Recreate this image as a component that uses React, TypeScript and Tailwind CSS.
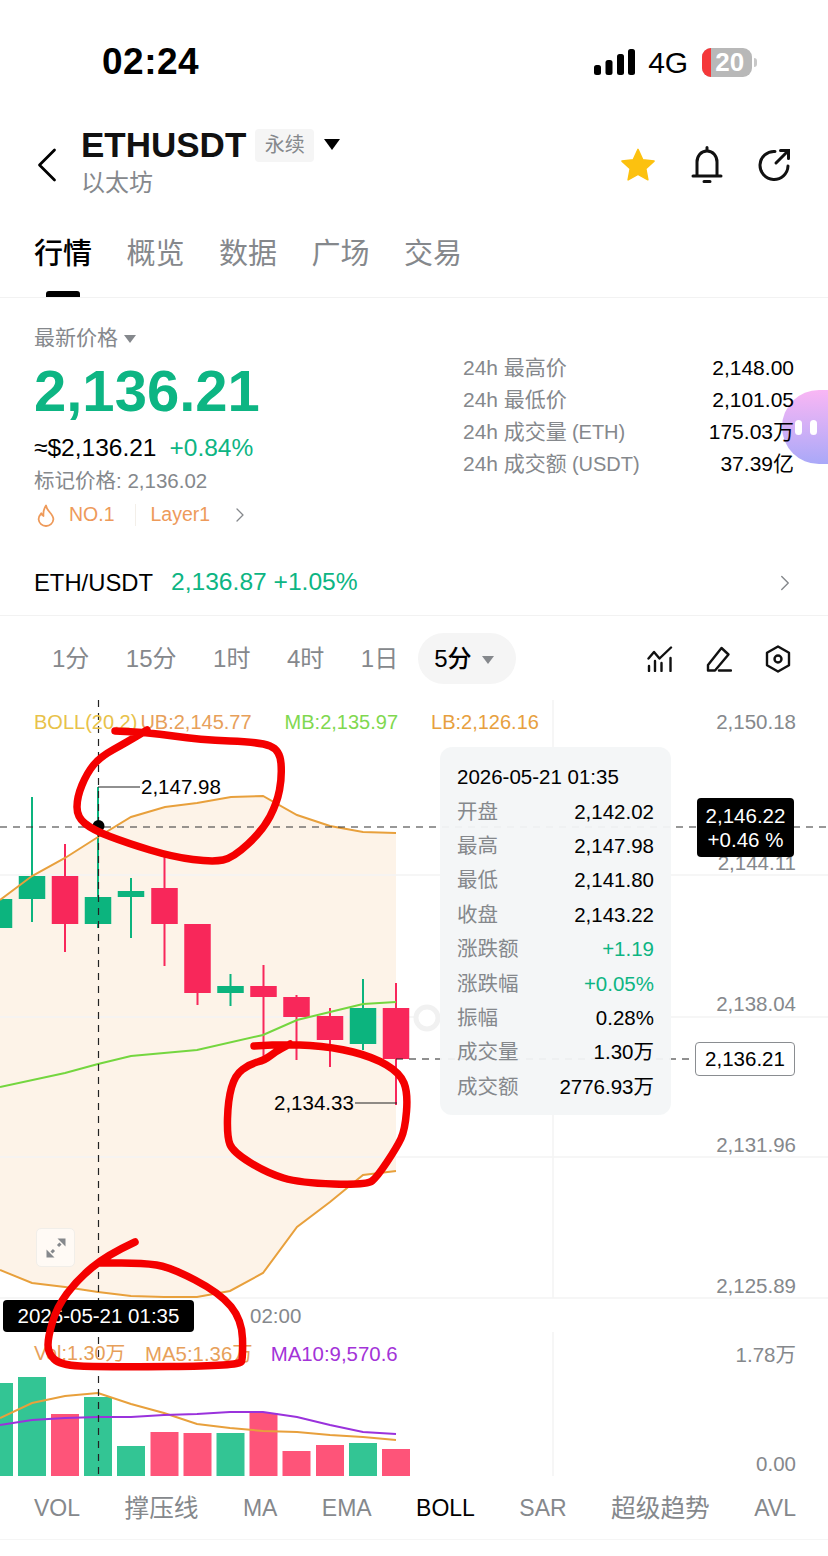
import { ChevronLeft, ChevronRight } from 'lucide-react';

type Pt = [number, number];

const CANDLES = [
    { x: -1, up: true, hi: 899, lo: 928, top: 899, bottom: 928 },
    { x: 32, up: true, hi: 797, lo: 922, top: 876, bottom: 899 },
    { x: 65, up: false, hi: 844, lo: 952, top: 876, bottom: 924 },
    { x: 98, up: true, hi: 787, lo: 928, top: 897, bottom: 924 },
    { x: 131, up: true, hi: 878, lo: 938, top: 891, bottom: 897 },
    { x: 164.5, up: false, hi: 855, lo: 966, top: 888, bottom: 924 },
    { x: 197.5, up: false, hi: 924, lo: 1005, top: 924, bottom: 993 },
    { x: 230.5, up: true, hi: 974, lo: 1006, top: 986, bottom: 993 },
    { x: 263.5, up: false, hi: 965, lo: 1063, top: 986, bottom: 997 },
    { x: 296.5, up: false, hi: 995, lo: 1060, top: 997, bottom: 1017 },
    { x: 330, up: false, hi: 1008, lo: 1067, top: 1016, bottom: 1040 },
    { x: 363, up: true, hi: 979, lo: 1050, top: 1008, bottom: 1044 },
    { x: 396, up: false, hi: 983, lo: 1105, top: 1008, bottom: 1059 },
];

const VOLUMES = [1383, 1377, 1414, 1397, 1446, 1432, 1433, 1433, 1413, 1451, 1445, 1443, 1449];

const UB: Pt[] = [[0, 900], [32, 876], [65, 858], [98, 837], [131, 817], [165, 807], [197, 803], [231, 797], [263, 796], [297, 815], [330, 826], [363, 832], [396, 833]];
const MB: Pt[] = [[0, 1087], [65, 1073], [98, 1064], [131, 1056], [197, 1050], [263, 1035], [297, 1020], [330, 1012], [363, 1004], [396, 1002]];
const LB: Pt[] = [[0, 1270], [32, 1283], [65, 1287], [98, 1292], [131, 1296], [164, 1297], [197, 1297], [230, 1291], [263, 1273], [297, 1227], [330, 1202], [363, 1175], [396, 1171]];
const MA5: Pt[] = [[0, 1418], [32, 1403], [65, 1396], [98, 1393], [131, 1404], [164, 1413], [197, 1424], [230, 1428], [263, 1431], [297, 1432], [330, 1435], [363, 1437], [396, 1440]];
const MA10: Pt[] = [[0, 1425], [32, 1420], [65, 1418], [98, 1417], [131, 1417], [164, 1415], [197, 1414], [230, 1412], [263, 1412], [297, 1417], [330, 1425], [363, 1432], [396, 1434]];

const SCRIBBLES: Pt[][] = [
    [[115, 731], [147, 732], [200, 740], [260, 742], [280, 750], [282, 777], [277, 803], [263, 830], [233, 858], [213, 862], [173, 857], [127, 843], [93, 830], [77, 817], [77, 797], [87, 773], [100, 757], [127, 742], [147, 730]],
    [[254, 1046], [287, 1044], [333, 1047], [373, 1057], [400, 1073], [408, 1093], [405, 1130], [397, 1147], [377, 1177], [367, 1185], [300, 1183], [267, 1173], [233, 1152], [227, 1137], [228, 1100], [235, 1075], [250, 1064], [265, 1060], [275, 1052], [290, 1044]],
    [[135, 1242], [107, 1255], [77, 1280], [57, 1307], [48, 1337], [48, 1353], [60, 1365], [100, 1367], [240, 1366], [243, 1357], [242, 1320], [220, 1293], [170, 1267], [143, 1263], [100, 1263]],
];

const AXIS = [
    { y: 722, label: '2,150.18' },
    { y: 863, label: '2,144.11' },
    { y: 1004, label: '2,138.04' },
    { y: 1145, label: '2,131.96' },
    { y: 1286, label: '2,125.89' },
    { y: 1355, label: '1.78万' },
    { y: 1464, label: '0.00' },
];

const OHLC = [
    { label: '开盘', value: '2,142.02' },
    { label: '最高', value: '2,147.98' },
    { label: '最低', value: '2,141.80' },
    { label: '收盘', value: '2,143.22' },
    { label: '涨跌额', value: '+1.19', green: true },
    { label: '涨跌幅', value: '+0.05%', green: true },
    { label: '振幅', value: '0.28%' },
    { label: '成交量', value: '1.30万' },
    { label: '成交额', value: '2776.93万' },
];

const STATS = [
    { label: '24h 最高价', unit: '', value: '2,148.00' },
    { label: '24h 最低价', unit: '', value: '2,101.05' },
    { label: '24h 成交量', unit: '(ETH)', value: '175.03万' },
    { label: '24h 成交额', unit: '(USDT)', value: '37.39亿' },
];

const line = (pts: Pt[]) => pts.map((p) => p.join(',')).join(' ');

// rounds a hand-drawn stroke by curving through the midpoints
const smooth = (pts: Pt[]) => {
    let d = `M${pts[0][0]} ${pts[0][1]}`;
    for (let i = 1; i < pts.length - 1; i++) {
        const mx = (pts[i][0] + pts[i + 1][0]) / 2;
        const my = (pts[i][1] + pts[i + 1][1]) / 2;
        d += ` Q${pts[i][0]} ${pts[i][1]} ${mx} ${my}`;
    }
    const last = pts[pts.length - 1];
    return `${d} L${last[0]} ${last[1]}`;
};

function StatusBar() {
    return (
        <div className="h-[124px] flex items-center pl-[102px]">
            <span className="text-[37px] font-bold text-black tracking-[0.5px]">02:24</span>
            <svg className="ml-[395px] w-[41px] h-[26px]" viewBox="0 0 41 26" fill="#000">
                <rect x="0" y="16" width="7" height="10" rx="2.5" />
                <rect x="11.5" y="11" width="7" height="15" rx="2.5" />
                <rect x="23" y="5" width="7" height="21" rx="2.5" />
                <rect x="34" y="0" width="7" height="26" rx="2.5" />
            </svg>
            <span className="ml-[13px] text-[30px] font-medium text-black">4G</span>
            <div className="ml-[14px] relative w-[50px] h-[29px] rounded-[9px] bg-[#b8b8b8] overflow-hidden flex items-center justify-end pr-[8px]">
                <div className="absolute left-0 top-0 bottom-0 w-[9px] bg-[#f5383a]" />
                <span className="text-[26px] leading-none font-bold text-white">20</span>
            </div>
            <div className="ml-[2px] w-[3px] h-[9px] rounded-r-full bg-[#c8c8c8]" />
        </div>
    );
}

function Header() {
    return (
        <div className="h-[88px] flex items-center pr-[37px] pb-[6px]">
            <ChevronLeft className="ml-[17px] w-[60px] h-[60px] text-black" strokeWidth={1.1} />
            <div className="ml-[4px] self-start flex flex-col">
                <div className="h-[42px] flex items-center">
                    <span className="text-[35px] font-bold text-[#111]">ETHUSDT</span>
                    <span className="ml-[9px] w-[59px] h-[33px] rounded-[4px] bg-[#f5f5f5] flex items-center justify-center text-[20px] text-[#85888c]">永续</span>
                    <div className="ml-[10px] mb-[2px] w-0 h-0 border-x-[8px] border-x-transparent border-t-[11px] border-t-black" />
                </div>
                <span className="h-[34px] leading-[34px] text-[24px] text-[#85888c]">以太坊</span>
            </div>
            <div className="ml-auto flex items-center gap-[33px]">
                <svg className="w-[38px] h-[36px]" viewBox="0 0 24 24" fill="#fcc10f">
                    <path d="M12 1.6l3.2 6.9 7.5.9-5.5 5.1 1.4 7.4L12 18.2l-6.6 3.7 1.4-7.4L1.3 9.4l7.5-.9z" stroke="#fcc10f" strokeLinejoin="round" />
                </svg>
                <svg className="w-[34px] h-[38px]" viewBox="0 0 34 38" fill="none" stroke="#111" strokeWidth="3">
                    <path d="M3 30h28M7 30V16c0-6 4-11 10-11s10 5 10 11v14" strokeLinecap="round" />
                    <path d="M17 1.5v3M14 35.5h6" strokeLinecap="round" />
                </svg>
                <svg className="w-[34px] h-[34px]" viewBox="0 0 34 34" fill="none" stroke="#111" strokeWidth="3" strokeLinecap="round">
                    <path d="M18 3.5A14 14 0 1 0 31 18" />
                    <path d="M19 15L31 3M23.5 2.5H31.5V10.5" />
                </svg>
            </div>
        </div>
    );
}

function Tabs() {
    const tabs = ['行情', '概览', '数据', '广场', '交易'];
    return (
        <div className="h-[86px] border-b border-[#f2f2f2] pl-[34px] pt-[23px] flex gap-[34.5px] relative">
            {tabs.map((t, i) => (
                <span key={t} className={i === 0 ? 'h-[38px] text-[29px] leading-[38px] font-medium text-black' : 'h-[38px] text-[29px] leading-[38px] text-[#85888c]'}>
                    {t}
                </span>
            ))}
            <div className="absolute left-[46px] bottom-0 w-[34px] h-[6px] rounded-t-[3px] bg-black" />
        </div>
    );
}

function PriceBlock() {
    return (
        <div className="h-[246px] flex">
            <div className="w-[463px] pl-[34px] pt-[26px] flex flex-col">
                <div className="h-[28px] flex items-center text-[21px] text-[#85888c]">
                    最新价格
                    <div className="ml-[6px] mt-[2px] w-0 h-0 border-x-[6px] border-x-transparent border-t-[8px] border-t-[#85888c]" />
                </div>
                <div className="mt-[7px] h-[64px] leading-[64px] text-[58px] font-bold text-[#0db583]">2,136.21</div>
                <div className="mt-[9px] h-[32px] flex items-center text-[24.5px]">
                    <span className="text-black">≈$2,136.21</span>
                    <span className="ml-[13px] text-[#0db583]">+0.84%</span>
                </div>
                <div className="mt-[2px] h-[30px] leading-[30px] text-[20.5px] text-[#85888c]">标记价格: 2,136.02</div>
                <div className="mt-[4px] h-[30px] flex items-center text-[19.5px] text-[#ee9a5a]">
                    <svg className="ml-[3px] w-[18px] h-[23px]" viewBox="0 0 18 23" fill="none" stroke="#ee9a5a" strokeWidth="1.8" strokeLinejoin="round">
                        <path d="M9 1.5c.6 3.5 2.2 4.7 4 7 2 2.4 3.4 4.3 3.4 6.8A7.3 7.3 0 0 1 9 22a7.3 7.3 0 0 1-7.4-6.7c0-2.6 1.2-4.4 2.6-6 .5 1.4 1.200 2.200 2.300 2.700C6 8 7 4.500 9 1.500z" />
                    </svg>
                    <span className="ml-[14px]">NO.1</span>
                    <div className="ml-[20px] w-px h-[22px] bg-[#f3efe9]" />
                    <span className="ml-[15px]">Layer1</span>
                    <ChevronRight className="ml-[18px] w-[24px] h-[24px] text-[#85888c]" strokeWidth={1.3} />
                </div>
            </div>
            <div className="relative z-10 flex-1 pt-[54px] pr-[34px] flex flex-col">
                {STATS.map((s) => (
                    <div key={s.label} className="h-[32px] flex items-center justify-between text-[21px]">
                        <span className="text-[#85888c]">
                            {s.label}
                            {s.unit && <span className="ml-[5px] text-[20px]">{s.unit}</span>}
                        </span>
                        <span className="text-black">{s.value}</span>
                    </div>
                ))}
            </div>
        </div>
    );
}

function SpotRow() {
    return (
        <div className="h-[72px] border-b border-[#f2f2f2] pl-[34px] pr-[30px] pt-[6px] flex items-center">
            <span className="text-[23.8px] text-black">ETH/USDT</span>
            <span className="ml-[18px] text-[24.6px] text-[#0db583]">2,136.87 +1.05%</span>
            <ChevronRight className="ml-auto w-[26px] h-[26px] text-[#85888c]" strokeWidth={1.3} />
        </div>
    );
}

function IntervalRow() {
    const items = ['1分', '15分', '1时', '4时', '1日'];
    return (
        <div className="h-[84px] pl-[52px] pr-[37px] pt-[17px] flex items-start">
            <div className="h-[51px] flex items-center gap-[36.5px] text-[24px] text-[#85888c]">
                {items.map((t) => (
                    <span key={t}>{t}</span>
                ))}
            </div>
            <div className="ml-[20px] w-[98px] h-[51px] rounded-full bg-[#f5f5f5] pl-[16px] flex items-center text-[24px] font-medium text-black">
                5分
                <div className="ml-[10px] mt-[2px] w-0 h-0 border-x-[6px] border-x-transparent border-t-[8px] border-t-[#85888c]" />
            </div>
            <div className="ml-auto h-[51px] flex items-center gap-[33px]">
                <svg className="w-[26px] h-[26px]" viewBox="0 0 26 26" fill="none" stroke="#111" strokeWidth="2.4" strokeLinecap="round" strokeLinejoin="round">
                    <path d="M1.500 12.500L7 6l5.500 6.500L24 1.500" />
                    <path d="M2 25v-5M8 25V15M14.500 25v-8M23.500 25V12" />
                </svg>
                <svg className="w-[26px] h-[26px]" viewBox="0 0 26 26" fill="none" stroke="#111" strokeWidth="2.4" strokeLinejoin="round" strokeLinecap="round">
                    <path d="M2 19L15.500 2l7 6.500L9 24.500H2z" />
                    <path d="M13 24.500h12" />
                </svg>
                <svg className="w-[26px] h-[28px]" viewBox="0 0 26 28" fill="none" stroke="#111" strokeWidth="2.400" strokeLinejoin="round">
                    <path d="M13 1.500l11 6.300v12.400l-11 6.300-11-6.300V7.800z" />
                    <circle cx="13" cy="14" r="3.500" />
                </svg>
            </div>
        </div>
    );
}

function ChartDrawing() {
    return (
        <svg className="absolute inset-0 w-full h-full" viewBox="0 700 828 776">
            <polygon points={line([...UB, ...[...LB].reverse()])} fill="#fdf3e8" />

            {/* grid */}
            <g stroke="#f4f4f4" strokeWidth="1.500">
                <path d="M0 875H828M0 1017H828M0 1157H828M0 1298H828" />
                <path d="M553 700V1298M553 1332V1476" />
            </g>

            <circle cx="427" cy="1018" r="11" fill="#fff" stroke="#f1f1f1" strokeWidth="5" />

            {/* candles */}
            {CANDLES.map((c) => (
                <g key={c.x} fill={c.up ? '#0cb47e' : '#f8275a'}>
                    <rect x={c.x - 1} y={c.hi} width="2" height={c.lo - c.hi} />
                    <rect x={c.x - 13.250} y={c.top} width="26.500" height={c.bottom - c.top} />
                </g>
            ))}

            <polyline points={line(UB)} fill="none" stroke="#e8a03c" strokeWidth="2" />
            <polyline points={line(MB)} fill="none" stroke="#74d63f" strokeWidth="2" />
            <polyline points={line(LB)} fill="none" stroke="#e8a03c" strokeWidth="2" />

            {/* volume */}
            {VOLUMES.map((top, i) => (
                <rect
                    key={i}
                    x={CANDLES[i].x - 14}
                    y={top}
                    width="28"
                    height={1476 - top}
                    fill={CANDLES[i].up ? '#33c594' : '#fe5479'}
                />
            ))}
            <polyline points={line(MA5)} fill="none" stroke="#e8a03c" strokeWidth="2" />
            <polyline points={line(MA10)} fill="none" stroke="#9a32dc" strokeWidth="2" />

            {/* crosshair and last price */}
            <path d="M98.500 700V1476" stroke="#222" strokeWidth="1.200" strokeDasharray="7 6" />
            <path d="M0 827H828" stroke="#333" strokeWidth="1.200" strokeDasharray="7 6" />
            <path d="M396 1059H694" stroke="#222" strokeWidth="1.200" strokeDasharray="7 6" />
            <circle cx="98.500" cy="826" r="6" fill="#000" />

            {/* high and low callouts */}
            <path d="M98 787H140M355 1103H397" stroke="#222" strokeWidth="1.200" />
        </svg>
    );
}

function Chart() {
    return (
        <div className="relative h-[776px] overflow-hidden">
            <ChartDrawing />

            <div className="absolute left-[34px] top-[9px] h-[26px] w-[520px] flex items-center text-[20px] whitespace-nowrap">
                <span className="text-[#e8c24a]">BOLL(20,2)</span>
                <span className="ml-[3px] text-[#e7a05a]">UB:2,145.77</span>
                <span className="ml-[33px] text-[#7fd84f]">MB:2,135.97</span>
                <span className="ml-[33px] text-[#e7a03e]">LB:2,126.16</span>
            </div>

            {AXIS.map((a) => (
                <span
                    key={a.label}
                    className="absolute right-[32px] text-[20.500px] leading-[26px] text-[#85888c]"
                    style={{ top: a.y - 700 - 13 }}
                >
                    {a.label}
                </span>
            ))}

            <span className="absolute left-[141px] top-[74px] text-[20.500px] leading-[26px] text-black">2,147.98</span>
            <span className="absolute left-[274px] top-[390px] text-[20.500px] leading-[26px] text-black">2,134.33</span>

            {/* OHLC tooltip */}
            <div className="absolute left-[440px] top-[47px] w-[231px] h-[368px] rounded-[12px] bg-[#f3f5f7]/95 pl-[17px] pr-[17px] pt-[13px]">
                <div className="h-[35px] leading-[34px] text-[20.500px] text-black">2026-05-21 01:35</div>
                {OHLC.map((row) => (
                    <div key={row.label} className="h-[34.350px] flex items-center justify-between text-[20.500px]">
                        <span className="text-[#85888c]">{row.label}</span>
                        <span className={row.green ? 'text-[#0db583]' : 'text-black'}>{row.value}</span>
                    </div>
                ))}
            </div>

            <div className="absolute left-[697px] top-[98px] w-[97px] h-[59px] rounded-[4px] bg-black flex flex-col items-center justify-center text-[20.500px] leading-[24px] text-white">
                <span>2,146.22</span>
                <span>+0.46 %</span>
            </div>
            <div className="absolute left-[695px] top-[342px] w-[100px] h-[34px] rounded-[4px] border border-[#8a8d91] bg-white flex items-center justify-center text-[20.500px] text-black">
                2,136.21
            </div>

            <div className="absolute left-[36px] top-[528px] w-[39px] h-[39px] rounded-[5px] border border-[#f1eee9] bg-[#fffaf5] flex items-center justify-center">
                <svg className="w-[22px] h-[22px]" viewBox="0 0 22 22" fill="none" stroke="#85888c" strokeWidth="3">
                    <path d="M13 9L15.500 6.500M9 13L6.500 15.500" />
                    <path d="M12.500 1.500H20.500V9.500z" fill="#85888c" stroke="none" />
                    <path d="M1.500 12.500V20.500H9.500z" fill="#85888c" stroke="none" />
                </svg>
            </div>

            <div className="absolute left-[3px] top-[600px] w-[191px] h-[32px] rounded-[4px] bg-black flex items-center justify-center text-[20.500px] text-white">
                2026-05-21 01:35
            </div>
            <span className="absolute left-[250px] top-[603px] text-[20.500px] leading-[26px] text-[#85888c]">02:00</span>

            <div className="absolute left-[34px] top-[641px] h-[26px] w-[400px] flex items-center text-[20.400px] whitespace-nowrap">
                <span className="w-[91px] text-[#e7a05a] text-[19.800px]">Vol:1.30万</span>
                <span className="ml-[20px] text-[#e7a05a]">MA5:1.36万</span>
                <span className="ml-[18px] text-[#a333d8]">MA10:9,570.6</span>
            </div>

            {/* marker strokes drawn over the screenshot */}
            <svg className="absolute inset-0 w-full h-full pointer-events-none" viewBox="0 700 828 776" fill="none" stroke="#f40000" strokeWidth="7.500" strokeLinecap="round" strokeLinejoin="round">
                {SCRIBBLES.map((s, i) => (
                    <path key={i} d={smooth(s)} />
                ))}
            </svg>
        </div>
    );
}

function IndicatorTabs() {
    const items = [
        { label: 'VOL', cjk: false },
        { label: '撑压线', cjk: true },
        { label: 'MA', cjk: false },
        { label: 'EMA', cjk: false },
        { label: 'BOLL', cjk: false },
        { label: 'SAR', cjk: false },
        { label: '超级趋势', cjk: true },
        { label: 'AVL', cjk: false },
    ];
    return (
        <div className="h-[64px] border-b border-[#f5f5f5] pl-[34px] pr-[32px] pt-[2px] flex items-center justify-between text-[23px]">
            {items.map((t) => (
                <span key={t.label} className={t.cjk ? 'text-[24.700px] text-[#85888c]' : t.label === 'BOLL' ? 'text-black' : 'text-[#85888c]'}>
                    {t.label}
                </span>
            ))}
        </div>
    );
}

export default function App() {
    return (
        <div className="relative w-[828px] h-[1556px] overflow-hidden bg-white font-['Liberation_Sans','Noto_Sans_CJK_SC',sans-serif]">
            <StatusBar />
            <Header />
            <Tabs />
            <PriceBlock />
            <SpotRow />
            <IntervalRow />
            <Chart />
            <IndicatorTabs />

            {/* floating assistant bubble */}
            <div className="absolute left-[782px] top-[390px] w-[60px] h-[74px] rounded-l-[37px] bg-gradient-to-b from-[#f9b6f4] to-[#a9a8f8] flex items-center gap-[8px] pl-[13px]">
                <div className="w-[7px] h-[15px] rounded-full bg-white" />
                <div className="w-[7px] h-[15px] rounded-full bg-white" />
            </div>
        </div>
    );
}
